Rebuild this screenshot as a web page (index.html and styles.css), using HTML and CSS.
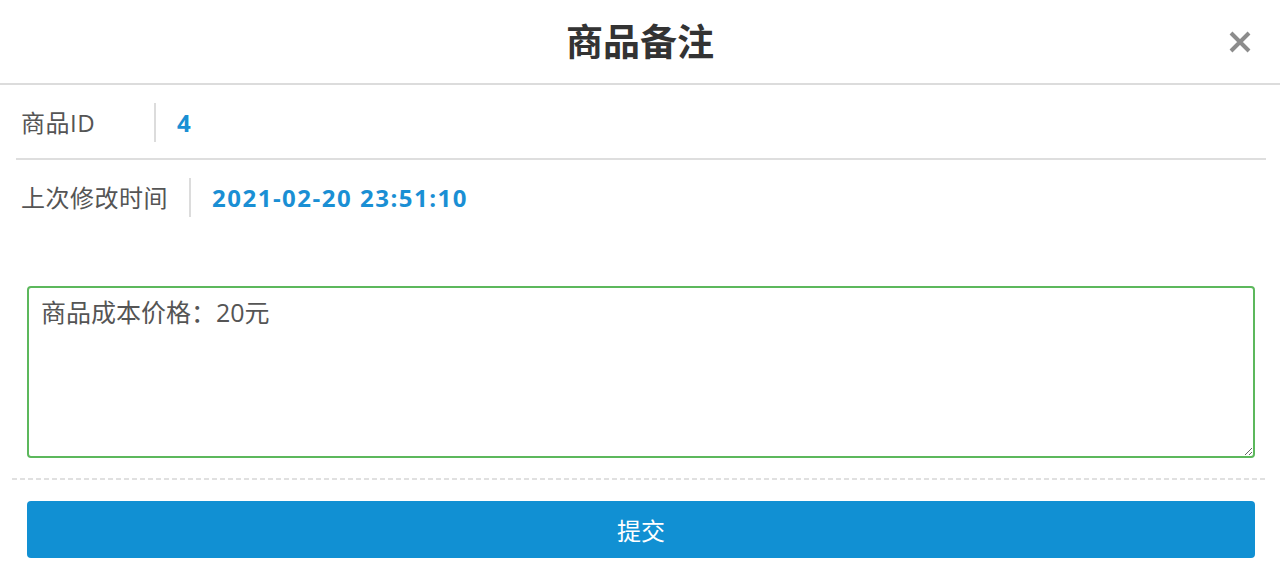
FILE: index.html
```html
<!DOCTYPE html>
<html lang="zh-CN">
<head>
<meta charset="utf-8">
<title>商品备注</title>
<link rel="stylesheet" href="styles.css">
</head>
<body>
<div class="dialog">
  <header class="dialog-header">
    <h1 class="dialog-title">商品备注</h1>
    <button class="close-btn" aria-label="关闭">
      <svg width="22" height="22" viewBox="0 0 22 22"><path d="M2 2 L20 20 M20 2 L2 20" stroke="#8c8c8c" stroke-width="4" stroke-linecap="butt"/></svg>
    </button>
  </header>
  <div class="info">
    <div class="info-row">
      <div class="info-label">商品ID</div>
      <div class="info-divider"></div>
      <div class="info-value">4</div>
    </div>
    <div class="info-row last">
      <div class="info-label">上次修改时间</div>
      <div class="info-divider"></div>
      <div class="info-value">2021-02-20 23:51:10</div>
    </div>
  </div>
  <form class="remark-form">
    <textarea class="remark-input">商品成本价格：20元</textarea>
    <div class="dash-line"></div>
    <button type="button" class="submit-btn">提交</button>
  </form>
</div>
</body>
</html>
```

FILE: styles.css
```css
* { box-sizing: border-box; }
html, body { margin: 0; padding: 0; background: #fff; }
body {
  font-family: "Open Sans", "Noto Sans CJK SC", sans-serif;
  color: #555;
}
.dialog { width: 1280px; }
.dialog-header {
  position: relative;
  height: 85px;
  border-bottom: 2px solid #dcdcdc;
  display: flex;
  align-items: center;
  justify-content: center;
}
.dialog-title {
  margin: 0;
  font-size: 37px;
  font-weight: 700;
  color: #333;
  line-height: 1;
}
.close-btn {
  position: absolute;
  right: 29px;
  top: 31px;
  border: 0;
  background: none;
  padding: 0;
  width: 22px;
  height: 22px;
  cursor: pointer;
}
.close-btn svg { display: block; }
.info { padding: 0 14px 0 16px; }
.info-row {
  display: flex;
  align-items: center;
  padding: 18px 0 16px;
  border-bottom: 2px solid #dedede;
}
.info-row.last { border-bottom: 0; }
.info-label {
  min-width: 112px;
  margin: 0 21px 0 5px;
  font-size: 24px;
  letter-spacing: 0.5px;
  color: #555;
  line-height: 39px;
}
.info-divider {
  width: 2px;
  height: 39px;
  background: #dcdcdc;
}
.info-value {
  padding-left: 21px;
  font-size: 24px;
  font-weight: 700;
  letter-spacing: 1.5px;
  color: #1a8fd4;
  line-height: 39px;
}
.remark-form {
  margin-top: 53px;
  padding: 0 14px 0 12px;
}
.remark-input {
  display: block;
  width: calc(100% - 26px);
  margin: 0 11px 0 15px;
  height: 172px;
  border: 2px solid #5cb85c;
  border-radius: 4px;
  padding: 8px 12px;
  font-family: "Open Sans", "Noto Sans CJK SC", sans-serif;
  font-size: 25px;
  color: #555;
  line-height: 1.3;
  resize: vertical;
  outline: none;
}
.dash-line {
  height: 2px;
  margin-top: 20px;
  background: repeating-linear-gradient(to right, #e0e0e0 0 5px, transparent 5px 8px);
}
.submit-btn {
  display: block;
  width: calc(100% - 26px);
  margin: 21px 11px 0 15px;
  height: 57px;
  border: 0;
  border-radius: 4px;
  background: #1190d3;
  color: #fff;
  font-family: "Open Sans", "Noto Sans CJK SC", sans-serif;
  font-size: 24px;
  cursor: pointer;
}
```
